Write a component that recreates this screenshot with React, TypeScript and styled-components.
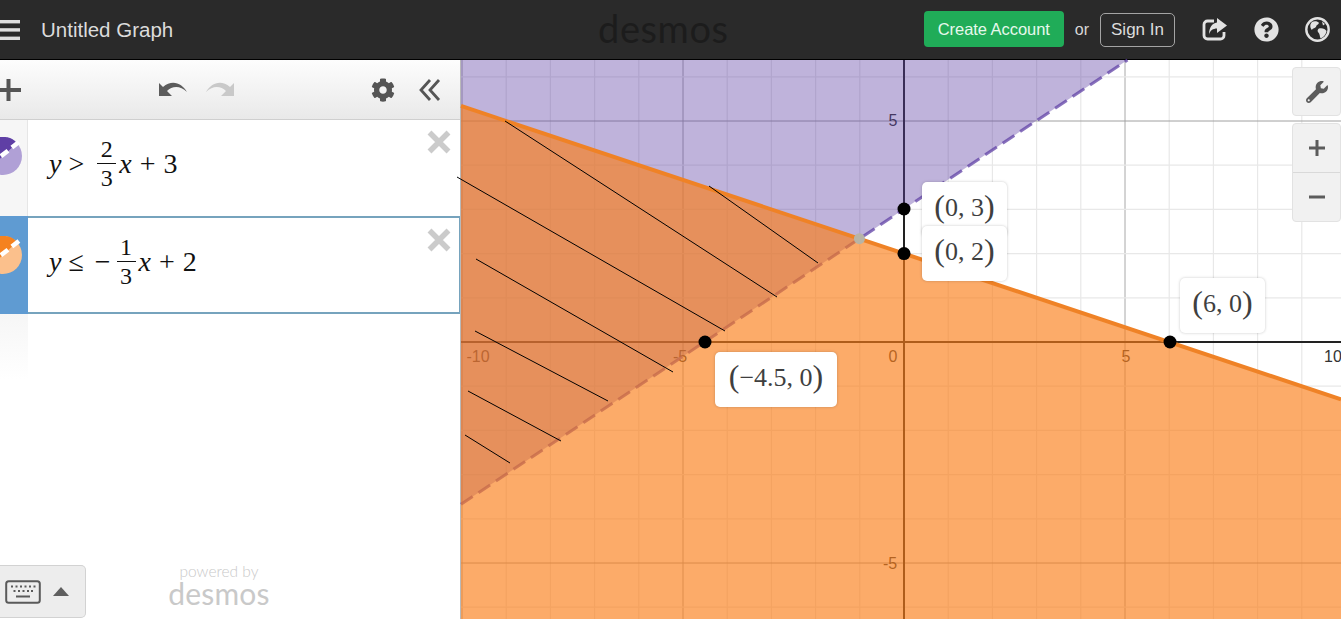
import styled, { createGlobalStyle } from "styled-components";
import { FaQuestionCircle, FaCog, FaWrench } from "react-icons/fa";

const ORIGIN_X = 904;
const ORIGIN_Y = 342;
const UNIT = 44.2;

const GRID_X = Array.from({ length: 21 }, (_, i) => i - 10);
const GRID_Y = Array.from({ length: 13 }, (_, i) => i - 6);

const HATCH = [
  [505, 121, 777, 297],
  [457, 177, 725, 331],
  [476, 259, 673, 372],
  [475, 331, 608, 401],
  [468, 391, 561, 441],
  [465, 435, 510, 463],
  [709, 186, 818, 263],
];

const POINTS = [
  [904, 209],
  [904, 253.6],
  [1170, 342],
  [705, 342],
];

const AXIS_LABELS = [
  { x: 478, y: 362, text: "-10" },
  { x: 680, y: 362, text: "-5" },
  { x: 893, y: 362, text: "0" },
  { x: 1126, y: 362, text: "5" },
  { x: 1333, y: 362, text: "10" },
  { x: 893, y: 126, text: "5" },
  { x: 890, y: 569, text: "-5" },
];

function Graph() {
  return (
    <GraphSvg viewBox="461 60 880 559">
      {GRID_X.map((k) => (
        <line
          key={k}
          x1={ORIGIN_X + k * UNIT}
          x2={ORIGIN_X + k * UNIT}
          y1={60}
          y2={619}
          stroke={k % 5 === 0 ? "#a8a8a8" : "#e8e8e8"}
          strokeWidth={k % 5 === 0 ? 1 : 1.2}
        />
      ))}
      {GRID_Y.map((k) => (
        <line
          key={k}
          x1={461}
          x2={1341}
          y1={ORIGIN_Y + k * UNIT}
          y2={ORIGIN_Y + k * UNIT}
          stroke={k % 5 === 0 ? "#a0a0a0" : "#e8e8e8"}
          strokeWidth={k % 5 === 0 ? 1 : 1.2}
        />
      ))}
      {AXIS_LABELS.map((l) => (
        <text
          key={l.text + l.x}
          x={l.x}
          y={l.y}
          textAnchor="middle"
          fontFamily="'Liberation Sans', Arial, sans-serif"
          fontSize="16"
          fill="#333"
        >
          {l.text}
        </text>
      ))}
      <line x1={904} x2={904} y1={60} y2={619} stroke="#222" strokeWidth={2} />
      <line x1={461} x2={1341} y1={342} y2={342} stroke="#222" strokeWidth={2} />

      <polygon points="461,60 1127.5,60 461,504.3" fill="#6042a6" fillOpacity={0.4} />
      <line
        x1={461}
        y1={504.3}
        x2={1127.5}
        y2={60}
        stroke="#6042a6"
        strokeOpacity={0.75}
        strokeWidth={3}
        strokeDasharray="14 7"
      />
      <polygon points="461,105.9 1341,399.3 1341,619 461,619" fill="#fa7e19" fillOpacity={0.65} />
      <line x1={461} y1={105.9} x2={1341} y2={399.3} stroke="#ef8226" strokeWidth={4} />

      <circle cx={859.4} cy={238.7} r={5.5} fill="#b8b4a6" />
      {HATCH.map(([x1, y1, x2, y2]) => (
        <line key={x1 + y1} x1={x1} y1={y1} x2={x2} y2={y2} stroke="#000" strokeWidth={1} />
      ))}
      {POINTS.map(([cx, cy]) => (
        <circle key={cx + cy} cx={cx} cy={cy} r={6.5} fill="#000" />
      ))}
    </GraphSvg>
  );
}

function CloseIcon() {
  return (
    <CloseSvg viewBox="0 0 24 24">
      <path d="M2.5 2.5 21.5 21.5M21.5 2.5 2.5 21.5" />
    </CloseSvg>
  );
}

function UndoIcon({ color, flip }: { color: string; flip?: boolean }) {
  return (
    <UndoSvg viewBox="0 0 30 20" $flip={flip} fill={color}>
      <path d="M1 3 1 16 14 16 9 11C14 6 22 5 29 12 24 3 14-1 5 7Z" />
    </UndoSvg>
  );
}

function ExpressionSwatch({ dark, light }: { dark: string; light: string }) {
  return (
    <SwatchSvg viewBox="0 0 38 38">
      <circle cx="19" cy="19" r="19" fill={light} />
      <path d="M0 19A19 19 0 0 1 33 6L6 31Z" fill={dark} />
      <path d="M6 28 36 4" stroke="#fff" strokeWidth="4.5" strokeDasharray="9 5" />
    </SwatchSvg>
  );
}

export default function App() {
  return (
    <Page>
      <GlobalStyle />
      <Header>
        <Hamburger viewBox="0 0 20 24">
          <rect x="-4" y="2" width="24" height="3.4" />
          <rect x="-4" y="10.2" width="24" height="3.4" />
          <rect x="-4" y="18.6" width="24" height="3.4" />
        </Hamburger>
        <Title>Untitled Graph</Title>
        <Logo>desmos</Logo>
        <HeaderRight>
          <CreateButton>Create Account</CreateButton>
          <Or>or</Or>
          <SignInButton>Sign In</SignInButton>
          <HeaderIcons>
            <svg width="25" height="23" viewBox="0 0 25 23">
              <path
                d="M12 3H5.5a3.5 3.5 0 0 0-3.5 3.5v11A3.5 3.5 0 0 0 5.5 21h13a3.5 3.5 0 0 0 3.5-3.5V14"
                fill="none"
                stroke="#e2e2e2"
                strokeWidth="2.8"
              />
              <path d="M15 0 25 7.5 15 15V10.500C11 10.500 8 12.500 7 16.500 7 10 10 5 15 4.500Z" fill="#e2e2e2" />
            </svg>
            <FaQuestionCircle size={25} />
            <svg width="25" height="25" viewBox="0 0 25 25">
              <circle cx="12.500" cy="12.500" r="11.200" fill="none" stroke="#e2e2e2" strokeWidth="2.400" />
              <path
                d="M7 5C9 3.500 13 4 14 6 13 8 11 8 11 10 9 12 7.500 11 7 13 5 11 4.500 7.500 7 5ZM14 11.500C17 10.500 20.500 12 21.500 14 21 18 18 20.500 15.500 21.500 14.500 19 15 17 13 15 12 13.500 13 12 14 11.500ZM17 4.500 20 7 18 8.500Z"
                fill="#e2e2e2"
              />
            </svg>
          </HeaderIcons>
        </HeaderRight>
      </Header>

      <Main>
        <Sidebar>
          <Toolbar>
            <PlusIcon viewBox="0 0 21 22">
              <path d="M-4 11H21M8.500 0V22" />
            </PlusIcon>
            <UndoRedo>
              <UndoIcon color="#5c5c5c" />
              <UndoIcon color="#c9c9c9" flip />
            </UndoRedo>
            <FaCog size={24} color="#555" />
            <CollapseIcon viewBox="0 0 22 22">
              <path d="M11 1 2 11 11 21M20 1 11 11 20 21" />
            </CollapseIcon>
          </Toolbar>

          <Row $height={96}>
            <RowTag $swatchTop={17}>
              <ExpressionSwatch dark="#5f3fa5" light="#b0a0d6" />
            </RowTag>
            <RowBody>
              <Formula>
                <Var>y</Var>
                <Op $gap={7}>&gt;</Op>
                <Fraction $gap={13}>
                  <Num>2</Num>
                  <Den>3</Den>
                </Fraction>
                <Var>x</Var>
                <Op $gap={8}>+</Op>
                <Digit>3</Digit>
              </Formula>
              <CloseIcon />
            </RowBody>
          </Row>

          <Row $height={98}>
            <RowTag $active $swatchTop={20}>
              <ExpressionSwatch dark="#f5821f" light="#fbc08c" />
            </RowTag>
            <RowBody $active>
              <Formula>
                <Var>y</Var>
                <Op $gap={7}>≤</Op>
                <Op $gap={11}>−</Op>
                <Fraction $gap={6}>
                  <Num>1</Num>
                  <Den>3</Den>
                </Fraction>
                <Var>x</Var>
                <Op $gap={8}>+</Op>
                <Digit>2</Digit>
              </Formula>
              <CloseIcon />
            </RowBody>
          </Row>

          <EmptyRow />

          <Footer>
            <KeyboardButton>
              <svg width="36" height="24" viewBox="0 0 36 24">
                <rect x="1.200" y="1.200" width="33.600" height="21.600" rx="2.500" fill="none" stroke="#5a5a5a" strokeWidth="2" />
                <path
                  d="M6 6.500h2M10.500 6.500h2M15 6.500h2M19.500 6.500h2M24 6.500h2M28.500 6.500h2M8.500 11h2M13 11h2M17.500 11h2M22 11h2M26 11h2M11 16.500h14"
                  stroke="#5a5a5a"
                  strokeWidth="2"
                />
              </svg>
              <Caret />
            </KeyboardButton>
            <Powered>
              <PoweredText>powered by</PoweredText>
              <PoweredLogo>desmos</PoweredLogo>
            </Powered>
          </Footer>
        </Sidebar>

        <GraphPane>
          <Graph />
          <ToolButton>
            <FaWrench size={22} color="#5c5c5c" />
          </ToolButton>
          <ZoomGroup>
            <ZoomButton>
              <svg width="18" height="18" viewBox="0 0 18 18">
                <path d="M1 9H17M9 1V17" stroke="#5c5c5c" strokeWidth="3" />
              </svg>
            </ZoomButton>
            <ZoomButton>
              <svg width="18" height="18" viewBox="0 0 18 18">
                <path d="M1 9H17" stroke="#5c5c5c" strokeWidth="3" />
              </svg>
            </ZoomButton>
          </ZoomGroup>

          <PointLabel $left={461} $top={122} $width={85}>
            <Paren>(</Paren>0, 3<Paren>)</Paren>
          </PointLabel>
          <PointLabel $left={461} $top={166} $width={85}>
            <Paren>(</Paren>0, 2<Paren>)</Paren>
          </PointLabel>
          <PointLabel $left={719} $top={218} $width={85}>
            <Paren>(</Paren>6, 0<Paren>)</Paren>
          </PointLabel>
          <PointLabel $left={254} $top={292} $width={122}>
            <Paren>(</Paren>−4.5, 0<Paren>)</Paren>
          </PointLabel>
        </GraphPane>
      </Main>
    </Page>
  );
}

const GlobalStyle = createGlobalStyle`
  html, body {
    margin: 0;
    padding: 0;
    overflow: hidden;
    font-family: "Liberation Sans", Arial, sans-serif;
  }
`;

const Page = styled.div`
  width: 1341px;
  height: 619px;
  display: flex;
  flex-direction: column;
  overflow: hidden;
  background: #fff;
`;

const Header = styled.header`
  height: 59px;
  flex: none;
  display: flex;
  align-items: center;
  background: #2a2a2a;
  border-bottom: 1px solid #000;
`;

const Hamburger = styled.svg`
  width: 20px;
  height: 24px;
  flex: none;
  fill: #dedede;
`;

const Title = styled.div`
  width: 557px;
  margin-left: 21px;
  flex: none;
  font-size: 20.5px;
  color: #dcdcdc;
`;

const Logo = styled.div`
  width: 132px;
  margin-top: -4px;
  flex: none;
  font-family: Lato, sans-serif;
  font-size: 38px;
  line-height: 38px;
  letter-spacing: 0.6px;
  color: #1c1c1c;
`;

const HeaderRight = styled.div`
  margin-left: auto;
  display: flex;
  align-items: center;
`;

const CreateButton = styled.div`
  width: 140px;
  height: 36px;
  margin-top: -1px;
  display: flex;
  align-items: center;
  justify-content: center;
  border-radius: 4px;
  background: #20ac58;
  color: #e6f8ec;
  font-size: 16.5px;
  letter-spacing: -0.05px;
`;

const Or = styled.span`
  margin: 0 11px;
  font-size: 16px;
  color: #d8d8d8;
`;

const SignInButton = styled.div`
  width: 73px;
  height: 32px;
  display: flex;
  align-items: center;
  justify-content: center;
  border: 1px solid #a4a4a4;
  border-radius: 5px;
  color: #dcdcdc;
  font-size: 17px;
`;

const HeaderIcons = styled.div`
  width: 128px;
  margin-left: 27px;
  margin-right: 11px;
  display: flex;
  align-items: center;
  justify-content: space-between;
  color: #e2e2e2;
`;

const Main = styled.div`
  flex: 1;
  display: flex;
  min-height: 0;
`;

const Sidebar = styled.aside`
  width: 460px;
  flex: none;
  display: flex;
  flex-direction: column;
  border-right: 1px solid #b9b9b9;
  background: #fff;
`;

const Toolbar = styled.div`
  height: 59px;
  flex: none;
  display: flex;
  align-items: center;
  background: linear-gradient(#fdfdfd, #e9e9e9);
  border-bottom: 1px solid #cfcfcf;
`;

const PlusIcon = styled.svg`
  width: 21px;
  height: 22px;
  flex: none;

  path {
    fill: none;
    stroke: #555;
    stroke-width: 4;
  }
`;

const UndoRedo = styled.div`
  margin-left: 137px;
  margin-right: 136px;
  width: 77px;
  display: flex;
  justify-content: space-between;
`;

const UndoSvg = styled.svg<{ $flip?: boolean }>`
  width: 30px;
  height: 20px;
  flex: none;
  transform: ${(p) => (p.$flip ? "scaleX(-1)" : "none")};
`;

const CollapseIcon = styled.svg`
  width: 22px;
  height: 22px;
  margin-left: 24px;
  flex: none;

  path {
    fill: none;
    stroke: #555;
    stroke-width: 2.8;
  }
`;

const Row = styled.div<{ $height: number }>`
  height: ${(p) => p.$height}px;
  flex: none;
  display: flex;
`;

const RowTag = styled.div<{ $active?: boolean; $swatchTop: number }>`
  width: 28px;
  flex: none;
  box-sizing: border-box;
  padding-top: ${(p) => p.$swatchTop}px;
  overflow: hidden;
  background: ${(p) => (p.$active ? "#5f9bd2" : "#f6f6f6")};
  border-right: ${(p) => (p.$active ? "none" : "1px solid #e6e6e6")};
`;

const SwatchSvg = styled.svg`
  display: block;
  width: 38px;
  height: 38px;
  margin-left: -16px;
`;

const RowBody = styled.div<{ $active?: boolean }>`
  flex: 1;
  box-sizing: border-box;
  display: flex;
  align-items: flex-start;
  justify-content: space-between;
  padding: 10px 9px 0 21px;
  border-style: solid;
  border-color: #76a3bd;
  border-width: ${(p) => (p.$active ? "2px 1px 2px 0" : "0")};
  padding-right: ${(p) => (p.$active ? 8 : 9)}px;
`;

const Formula = styled.div`
  display: flex;
  align-items: center;
  margin-top: 5px;
  font-family: "Liberation Serif", "Times New Roman", serif;
  font-size: 28px;
  color: #111;
`;

const Var = styled.span`
  font-style: italic;
`;

const Op = styled.span<{ $gap: number }>`
  margin-left: ${(p) => p.$gap}px;
`;

const Digit = styled.span`
  margin-left: 8px;
`;

const Fraction = styled.span<{ $gap: number }>`
  margin-left: ${(p) => p.$gap}px;
  margin-right: 3px;
  display: inline-flex;
  flex-direction: column;
  align-items: center;
  font-size: 24px;
  line-height: 28px;
`;

const Num = styled.span`
  padding: 0 3.5px;
  border-bottom: 1px solid #111;
`;

const Den = styled.span`
  padding: 0 3.5px;
`;

const CloseSvg = styled.svg`
  width: 24px;
  height: 24px;
  flex: none;

  path {
    fill: none;
    stroke: #cbcbcb;
    stroke-width: 5.5;
  }
`;

const EmptyRow = styled.div`
  width: 28px;
  height: 66px;
  flex: none;
  background: linear-gradient(#f6f6f6, #fff);
`;

const Footer = styled.div`
  margin-top: auto;
  margin-bottom: 1px;
  display: flex;
  align-items: flex-start;
`;

const KeyboardButton = styled.div`
  width: 86px;
  height: 53px;
  box-sizing: border-box;
  padding-left: 5px;
  display: flex;
  align-items: center;
  gap: 12px;
  background: #ededed;
  border: 1px solid #d2d2d2;
  border-left: none;
  border-radius: 0 5px 5px 0;
`;

const Caret = styled.span`
  width: 0;
  height: 0;
  border-left: 8px solid transparent;
  border-right: 8px solid transparent;
  border-bottom: 9px solid #5f5f5f;
`;

const Powered = styled.div`
  width: 104px;
  margin-left: 81px;
  margin-top: -3px;
  display: flex;
  flex-direction: column;
  align-items: center;
  font-family: Lato, sans-serif;
  color: #c9c9c9;
`;

const PoweredText = styled.span`
  font-size: 15.5px;
  font-weight: 300;
  line-height: 19px;
`;

const PoweredLogo = styled.span`
  font-size: 30px;
  line-height: 36px;
  margin-top: -6px;
  letter-spacing: 0.2px;
`;

const GraphPane = styled.main`
  position: relative;
  flex: 1;
  min-width: 0;
`;

const GraphSvg = styled.svg`
  display: block;
  width: 880px;
  height: 559px;
  overflow: visible;
`;

const ToolButton = styled.div`
  position: absolute;
  top: 7px;
  right: 0;
  width: 47px;
  height: 47px;
  display: flex;
  align-items: center;
  justify-content: center;
  background: #f1f1f1;
  border: 1px solid #e2e2e2;
  border-radius: 4px;
`;

const ZoomGroup = styled.div`
  position: absolute;
  top: 63px;
  right: 0;
  width: 47px;
  border: 1px solid #e2e2e2;
  border-radius: 4px;
  background: #f1f1f1;
`;

const ZoomButton = styled.div`
  height: 48px;
  display: flex;
  align-items: center;
  justify-content: center;

  & + & {
    border-top: 1px solid #d9d9d9;
  }
`;

const PointLabel = styled.div<{ $left: number; $top: number; $width: number }>`
  position: absolute;
  left: ${(p) => p.$left}px;
  top: ${(p) => p.$top}px;
  width: ${(p) => p.$width}px;
  height: 55px;
  box-sizing: border-box;
  padding-bottom: 3px;
  display: flex;
  align-items: center;
  justify-content: center;
  background: #fff;
  border-radius: 5px;
  box-shadow: 0 0 3px rgba(0, 0, 0, 0.22);
  font-family: "Liberation Serif", "Times New Roman", serif;
  font-size: 26px;
  color: #3f3f3f;
  white-space: pre;
`;

const Paren = styled.span`
  font-size: 32px;
  line-height: 32px;
  margin-top: -4px;
  font-weight: 300;
`;
